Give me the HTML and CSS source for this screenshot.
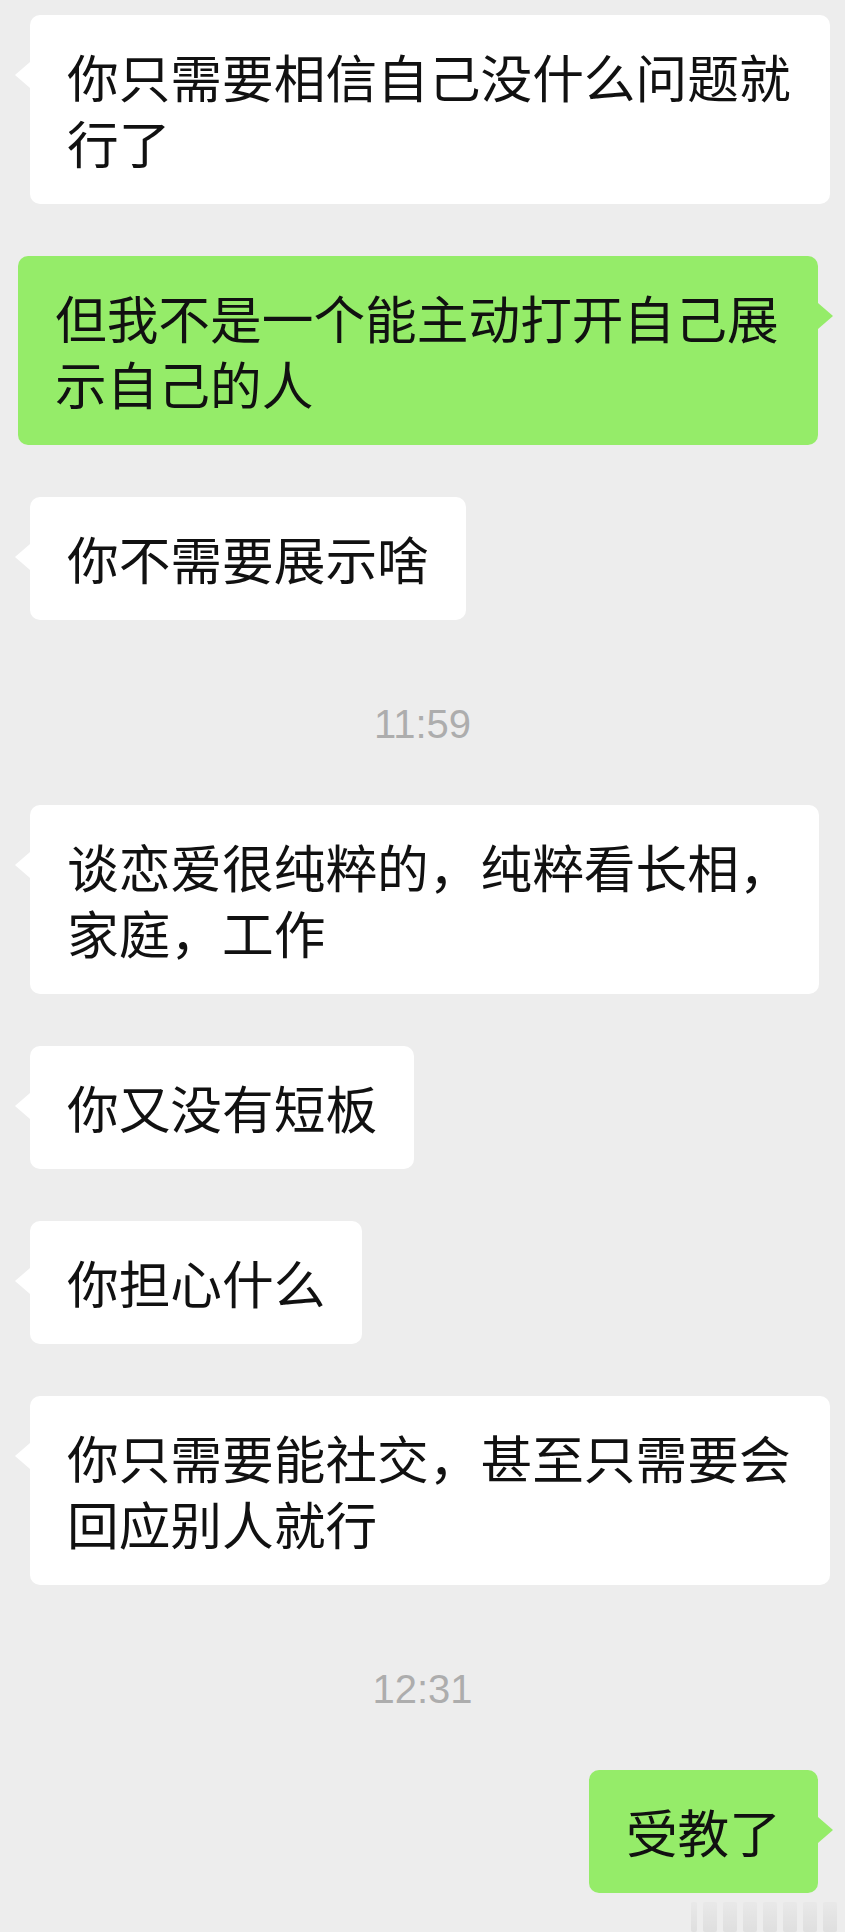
FILE: index.html
```html
<!DOCTYPE html>
<html lang="zh-CN">
<head>
<meta charset="utf-8">
<title>聊天记录</title>
<link rel="stylesheet" href="styles.css">
</head>
<body>

<div class="chat">
  <div class="msg left">
    <div class="bubble">你只需要相信自己没什么问题就行了</div>
  </div>
  <div class="msg right">
    <div class="bubble me">但我不是一个能主动打开自己展示自己的人</div>
  </div>
  <div class="msg left">
    <div class="bubble">你不需要展示啥</div>
  </div>

  <div class="time">11:59</div>

  <div class="msg left">
    <div class="bubble tight">谈恋爱很纯粹的，纯粹看长相，家庭，工作</div>
  </div>
  <div class="msg left">
    <div class="bubble">你又没有短板</div>
  </div>
  <div class="msg left">
    <div class="bubble">你担心什么</div>
  </div>
  <div class="msg left">
    <div class="bubble">你只需要能社交，甚至只需要会回应别人就行</div>
  </div>

  <div class="time">12:31</div>

  <div class="msg right">
    <div class="bubble me">受教了</div>
  </div>

  <div class="mark">
    <span></span><span></span><span></span><span></span><span></span><span></span><span></span><span></span>
  </div>
</div>

</body>
</html>
```

FILE: styles.css
```css
*{margin:0;padding:0;box-sizing:border-box;}
body{background:#ededed;font-family:"Noto Sans CJK SC","Liberation Sans",sans-serif;color:#111;}

.chat{display:flex;flex-direction:column;gap:52px;padding-top:15px;}

.msg{display:flex;}
.msg.left{padding-left:30px;}
.msg.right{justify-content:flex-end;padding-right:27px;}

.bubble{position:relative;max-width:800px;padding:28px 37px 29px;background:#fff;border-radius:10px;font-size:51.7px;line-height:66px;}
.bubble.tight{max-width:789px;padding-right:26px;}
.bubble.me{background:#95ec69;}

/* little tail beside the bubble */
.bubble:before{content:"";position:absolute;top:47px;left:-15px;border-style:solid;border-width:13px 15px 13px 0;border-color:transparent #fff transparent transparent;}
.bubble.me:before{left:auto;right:-15px;border-width:13px 0 13px 15px;border-color:transparent transparent transparent #95ec69;}

.time{padding:32px 0 9px;text-align:center;font-family:"Liberation Sans",Arial,sans-serif;font-size:40px;line-height:40px;color:#adadad;}

.mark{display:flex;justify-content:flex-end;gap:6px;margin-top:-43px;padding-right:8px;height:30px;opacity:.45;}
.mark span{width:14px;background:linear-gradient(#e4e4e4,#cfcfcf);border-radius:2px;}
.mark span:first-child{width:6px;}
```
